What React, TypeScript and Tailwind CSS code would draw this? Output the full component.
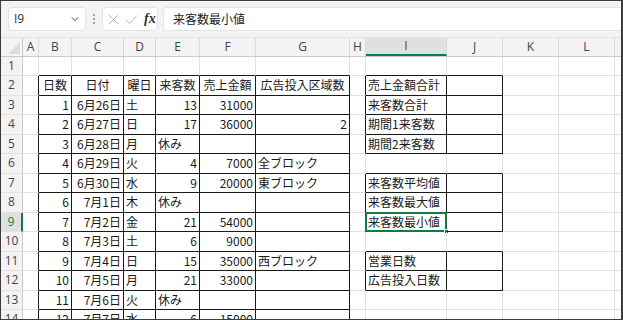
import { ChevronDown } from 'lucide-react';

type Align = 'l' | 'r' | 'c';

const cols = [
  { k: 'A', w: 'w-[16px]' },
  { k: 'B', w: 'w-[33px]' },
  { k: 'C', w: 'w-[52px]' },
  { k: 'D', w: 'w-[32px]' },
  { k: 'E', w: 'w-[44px]' },
  { k: 'F', w: 'w-[56px]' },
  { k: 'G', w: 'w-[94px]' },
  { k: 'H', w: 'w-[16px]' },
  { k: 'I', w: 'w-[81px]' },
  { k: 'J', w: 'w-[56px]' },
  { k: 'K', w: 'w-[56px]' },
  { k: 'L', w: 'w-[56px]' },
  { k: '', w: 'w-[56px]' },
];

const days = [
  ['1', '6月26日', '土', '13', '31000', ''],
  ['2', '6月27日', '日', '17', '36000', '2'],
  ['3', '6月28日', '月', '休み', '', ''],
  ['4', '6月29日', '火', '4', '7000', '全ブロック'],
  ['5', '6月30日', '水', '9', '20000', '東ブロック'],
  ['6', '7月1日', '木', '休み', '', ''],
  ['7', '7月2日', '金', '21', '54000', ''],
  ['8', '7月3日', '土', '6', '9000', ''],
  ['9', '7月4日', '日', '15', '35000', '西ブロック'],
  ['10', '7月5日', '月', '21', '33000', ''],
  ['11', '7月6日', '火', '休み', '', ''],
  ['12', '7月7日', '水', '6', '15000', ''],
];

const labels: Record<number, string> = {
  2: '売上金額合計',
  3: '来客数合計',
  4: '期間1来客数',
  5: '期間2来客数',
  7: '来客数平均値',
  8: '来客数最大値',
  9: '来客数最小値',
  11: '営業日数',
  12: '広告投入日数',
};

function cellValue(c: number, r: number): { v: string; a: Align } {
  // c: 0 = A ... 12 = M
  if (r === 2 && c >= 1 && c <= 6) {
    return { v: ['日数', '日付', '曜日', '来客数', '売上金額', '広告投入区域数'][c - 1], a: 'c' };
  }
  if (r >= 3 && c >= 1 && c <= 6) {
    const v = days[r - 3][c - 1];
    if (c === 2) return { v, a: 'r' };
    return { v, a: isNaN(Number(v)) ? 'l' : 'r' };
  }
  if (c === 8 && labels[r]) return { v: labels[r], a: 'l' };
  return { v: '', a: 'l' };
}

function inTable(c: number, r: number) {
  if (c >= 1 && c <= 6 && r >= 2) return true;
  if (c >= 8 && c <= 9) {
    if (r >= 2 && r <= 5) return true;
    if (r >= 7 && r <= 9) return true;
    if (r >= 11 && r <= 12) return true;
  }
  return false;
}

function Cell({ c, r }: { c: number; r: number }) {
  const { v, a } = cellValue(c, r);
  const right = inTable(c, r) || inTable(c + 1, r);
  const bottom = inTable(c, r) || inTable(c, r + 1);
  const selected = c === 8 && r === 9;
  return (
    <div
      className={[
        'relative shrink-0 h-full border-r border-b flex items-center px-[2px] whitespace-nowrap',
        cols[c].w,
        right ? 'border-r-[#1a1a1a]' : 'border-r-[#e1e1e1]',
        bottom ? 'border-b-[#1a1a1a]' : 'border-b-[#e1e1e1]',
        a === 'r' ? 'justify-end' : a === 'c' ? 'justify-center' : 'justify-start',
      ].join(' ')}
    >
      <span className="text-[12px] leading-none text-[#1a1a1a]">{v}</span>
      {selected && (
        <div className="absolute -left-[1px] -top-[1px] -right-[1px] -bottom-[1px] border-2 border-[#107c41]">
          <div className="absolute -right-[4px] -bottom-[4px] w-[5px] h-[5px] bg-[#107c41] border border-white" />
        </div>
      )}
    </div>
  );
}

export default function App() {
  const rows = Array.from({ length: 14 }, (_, i) => i + 1);
  return (
    <div
      className="w-[623px] h-[320px] overflow-hidden bg-white border border-[#3c3c3c] border-r-2 flex flex-col"
      style={{ fontFamily: '"Noto Sans CJK JP", sans-serif' }}
    >
      {/* formula bar */}
      <div className="h-[37px] shrink-0 flex items-center bg-[#f3f3f3] border-b border-[#e3e3e3] pl-[7px]">
        <div className="w-[78px] h-[24px] bg-white rounded-[4px] border border-[#e3e3e3] flex items-center pl-[5px] pr-[4px]">
          <span className="flex-1 text-[12px] text-[#333]" style={{ fontFamily: '"Open Sans", sans-serif' }}>I9</span>
          <ChevronDown className="w-[12px] h-[12px] text-[#444]" strokeWidth={2} />
        </div>
        <div className="w-[16px] flex flex-col items-center gap-[2px]">
          <span className="w-[2px] h-[2px] rounded-full bg-[#888]" />
          <span className="w-[2px] h-[2px] rounded-full bg-[#888]" />
          <span className="w-[2px] h-[2px] rounded-full bg-[#888]" />
        </div>
        <div className="w-[56px] h-[24px] bg-white rounded-[4px] border border-[#e3e3e3] flex items-center pl-[5px] gap-[6px]">
          <svg width="11" height="11" viewBox="0 0 11 11" className="text-[#b8b8b8]">
            <path d="M1 1L10 10M10 1L1 10" stroke="currentColor" strokeWidth="1" />
          </svg>
          <svg width="13" height="11" viewBox="0 0 13 11" className="text-[#b8b8b8]">
            <path d="M1 6L4.5 9.5L12 1.5" stroke="currentColor" strokeWidth="1" fill="none" />
          </svg>
          <span
            className="text-[14px] italic font-bold text-[#333] leading-none"
            style={{ fontFamily: '"Liberation Serif", serif' }}
          >
            fx
          </span>
        </div>
        <div className="flex-1 ml-[5px] h-[24px] bg-white rounded-l-[4px] border border-r-0 border-[#e3e3e3] flex items-center pl-[9px]">
          <span className="text-[12px] text-[#222]">来客数最小値</span>
        </div>
      </div>

      {/* column headers */}
      <div
        className="h-[19px] shrink-0 flex bg-[#f3f3f3] border-b border-[#c8c8c8] text-[12px] text-[#444]"
        style={{ fontFamily: '"Open Sans", sans-serif' }}
      >
        <div className="relative w-[22px] shrink-0 border-r border-[#c8c8c8]">
          <svg width="12" height="12" viewBox="0 0 12 12" className="absolute right-[2px] bottom-[2px]">
            <path d="M12 0L12 12L0 12Z" fill="#dcdcdc" />
          </svg>
        </div>
        {cols.map((col, i) => (
          <div
            key={i}
            className={[
              'shrink-0 flex items-center justify-center border-r border-[#dadada]',
              col.w,
              col.k === 'I' ? 'bg-[#e0e0e0] border-b-2 border-b-[#107c41]' : '',
            ].join(' ')}
          >
            {col.k}
          </div>
        ))}
      </div>

      {/* rows */}
      {rows.map((r) => (
        <div key={r} className={['shrink-0 flex', r === 1 ? 'h-[19px]' : 'h-[19.5px]'].join(' ')}>
          <div
            className={[
              'w-[22px] shrink-0 flex items-center justify-center text-[12px] border-b border-b-[#e1e1e1]',
              r === 9
                ? 'bg-[#e0e0e0] text-[#107c41] border-r-2 border-r-[#107c41]'
                : 'bg-[#f3f3f3] text-[#444] border-r border-r-[#c8c8c8]',
            ].join(' ')}
            style={{ fontFamily: '"Open Sans", sans-serif' }}
          >
            {r}
          </div>
          {cols.map((_, c) => (
            <Cell key={c} c={c} r={r} />
          ))}
        </div>
      ))}
    </div>
  );
}
